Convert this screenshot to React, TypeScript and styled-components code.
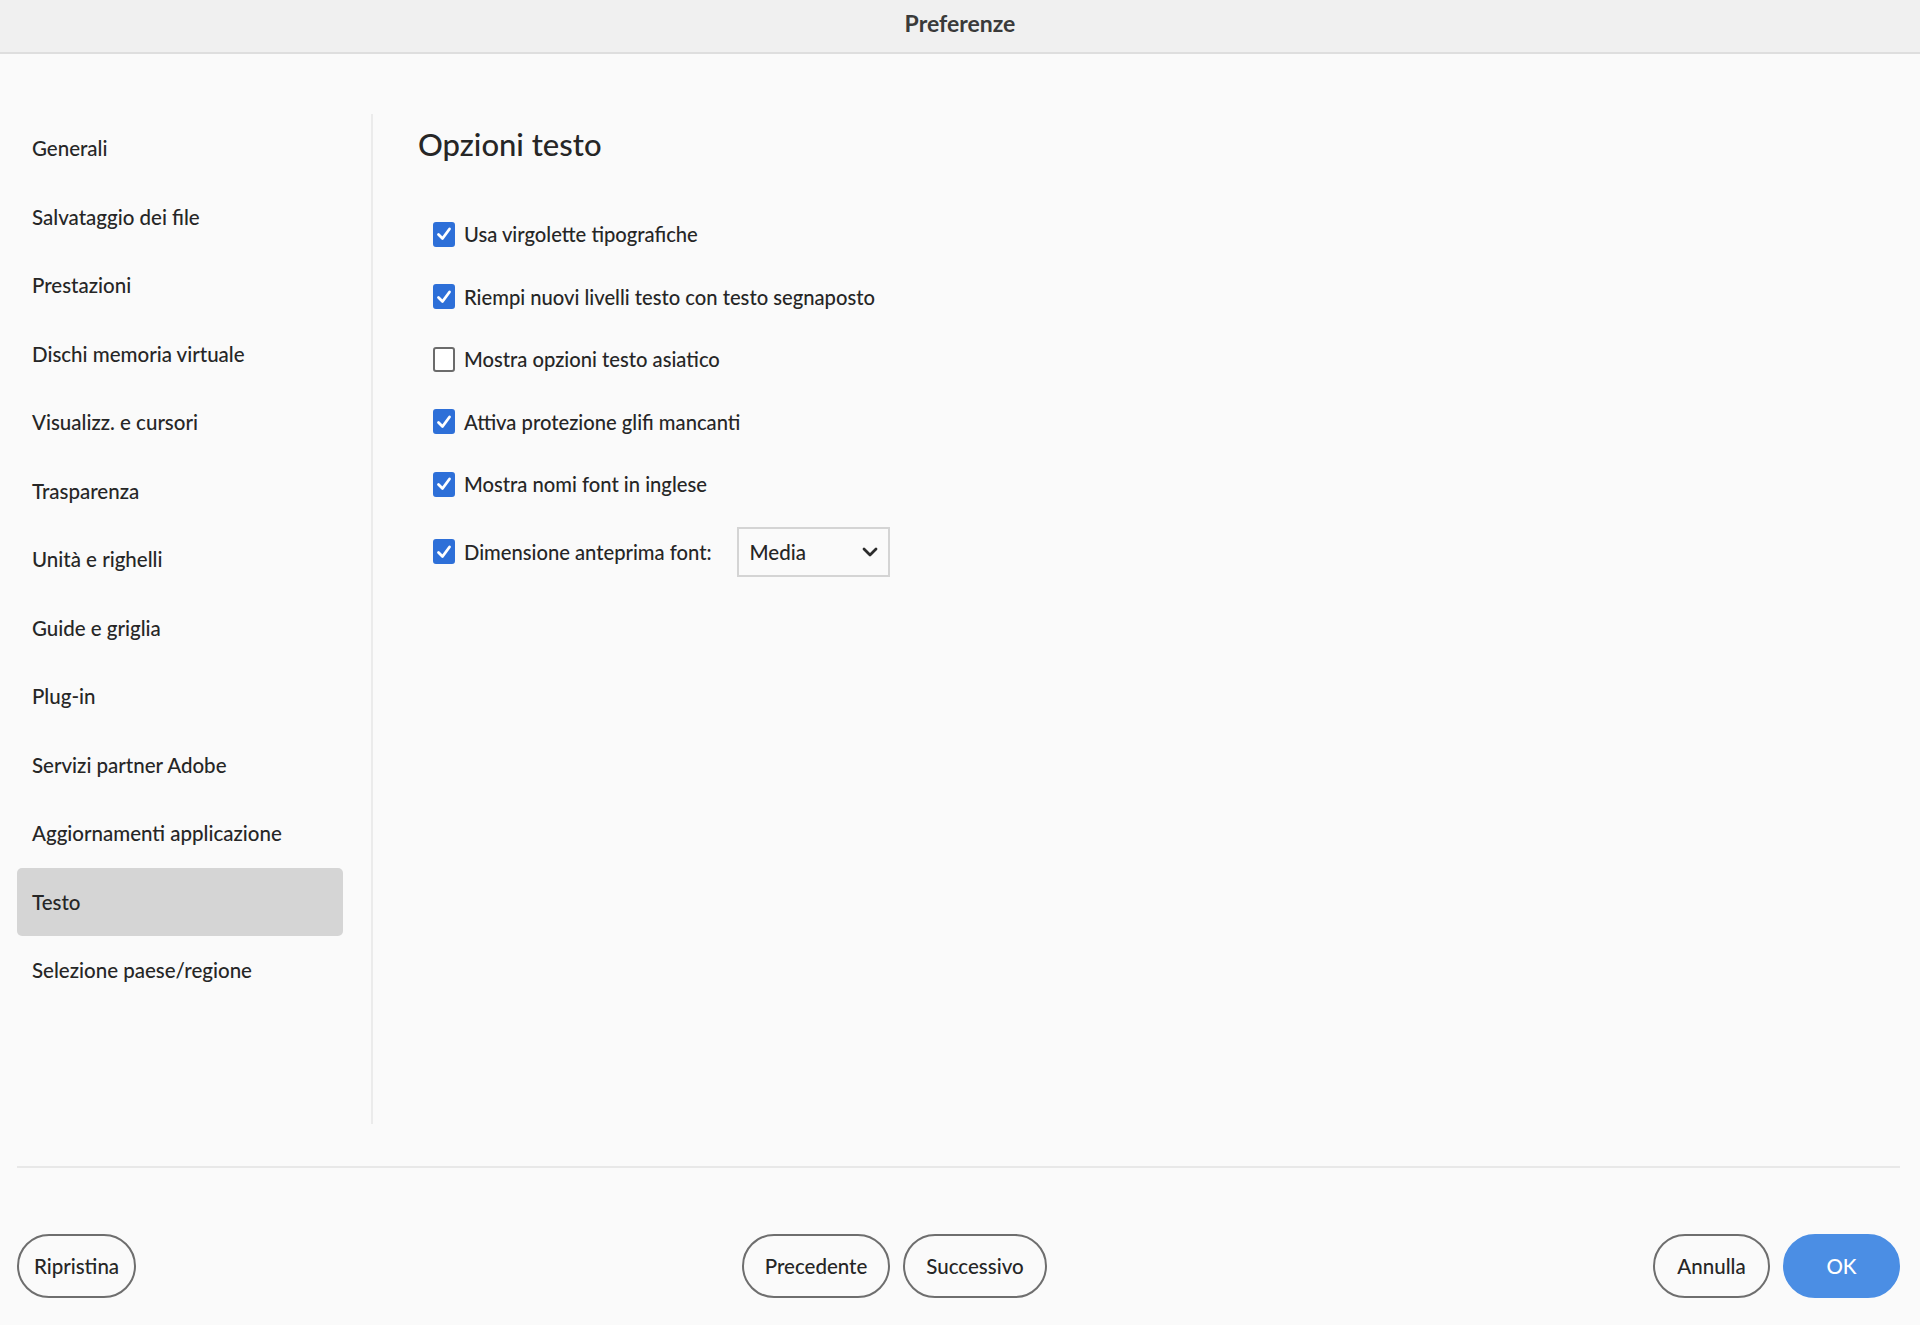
import React from "react";
import styled, { createGlobalStyle } from "styled-components";

const FONT = `Lato, "Liberation Sans", sans-serif`;

const Global = createGlobalStyle`
  html, body { margin: 0; padding: 0; background: #fafafa; }
  body { font-family: ${FONT}; color: #2c2c2c; }
  * { box-sizing: border-box; }
`;

const Page = styled.div`
  width: 1920px;
  height: 1325px;
  display: flex;
  flex-direction: column;
  background: #fafafa;
  overflow: hidden;
`;

const TitleBar = styled.header`
  height: 54px;
  flex: none;
  display: flex;
  align-items: center;
  justify-content: center;
  background: #f0f0f0;
  border-bottom: 2px solid #dedede;
  font-size: 23px;
  font-weight: 700;
  color: #3a3a3a;
  padding-bottom: 6px;
`;

const Main = styled.div`
  display: flex;
  padding: 60px 20px 0 17px;
  height: 1070px;
  flex: none;
`;

const Sidebar = styled.nav`
  width: 326px;
  flex: none;
  display: flex;
  flex-direction: column;
`;

const NavItem = styled.div<{ $active?: boolean }>`
  height: 68.5px;
  display: flex;
  align-items: center;
  padding-left: 15px;
  font-size: 20.5px;
  font-weight: 500;
  color: #262626;
  border-radius: 5px;
  background: ${(p) => (p.$active ? "#d5d5d5" : "transparent")};
`;

const VDivider = styled.div`
  width: 2px;
  height: 1010px;
  margin-left: 28px;
  background: #ebebeb;
  flex: none;
`;

const Content = styled.section`
  flex: 1;
  padding-left: 45px;
  display: flex;
  flex-direction: column;
`;

const Heading = styled.h1`
  margin: 0;
  font-size: 31px;
  line-height: 60px;
  font-weight: 500;
  color: #262626;
`;

const Options = styled.div`
  margin-top: 29px;
  display: flex;
  flex-direction: column;
  padding-left: 15px;
`;

const Row = styled.label<{ $tall?: boolean }>`
  height: ${(p) => (p.$tall ? "72px" : "62.5px")};
  display: flex;
  align-items: center;
  gap: 9px;
  font-size: 20.2px;
  font-weight: 500;
  color: #262626;
`;

const Box = styled.span<{ $checked: boolean }>`
  width: 22px;
  height: 25px;
  flex: none;
  border-radius: 3px;
  display: flex;
  align-items: center;
  justify-content: center;
  background: ${(p) => (p.$checked ? "#2d6fd8" : "#ffffff")};
  border: 2px solid ${(p) => (p.$checked ? "#2d6fd8" : "#6b6b6b")};
`;

const Select = styled.div`
  margin-left: 16px;
  width: 153px;
  height: 50px;
  border: 2px solid #d4d4d4;
  background: #fafafa;
  display: flex;
  align-items: center;
  justify-content: space-between;
  padding: 0 10px 0 11px;
  font-size: 20.5px;
  font-weight: 500;
  color: #262626;
`;

const FooterLine = styled.div`
  margin: 42px 20px 0 17px;
  height: 2px;
  background: #e8e8e8;
  flex: none;
`;

const Footer = styled.footer`
  display: flex;
  justify-content: space-between;
  align-items: center;
  padding: 66px 20px 0 17px;
`;

const Group = styled.div`
  display: flex;
  gap: 13px;
`;

const Button = styled.button<{ $w: number; $primary?: boolean }>`
  width: ${(p) => p.$w}px;
  height: 64px;
  border-radius: 32px;
  font-family: ${FONT};
  font-size: 20.5px;
  font-weight: 500;
  display: flex;
  align-items: center;
  justify-content: center;
  padding: 0;
  cursor: pointer;
  color: ${(p) => (p.$primary ? "#ffffff" : "#262626")};
  background: ${(p) => (p.$primary ? "#4b8ee4" : "transparent")};
  border: 2px solid ${(p) => (p.$primary ? "#4b8ee4" : "#6e6e6e")};
`;

const Check = () => (
  <svg width="16" height="16" viewBox="0 0 16 16" fill="none">
    <path d="M2.5 8.5 L6.5 12.5 L13.5 3" stroke="#fff" strokeWidth="2.8" strokeLinecap="round" strokeLinejoin="round" />
  </svg>
);

const Chevron = () => (
  <svg width="16" height="10" viewBox="0 0 16 10" fill="none">
    <path d="M2 2 L8 8 L14 2" stroke="#2c2c2c" strokeWidth="2.8" strokeLinecap="round" strokeLinejoin="round" />
  </svg>
);

const navItems = [
  "Generali",
  "Salvataggio dei file",
  "Prestazioni",
  "Dischi memoria virtuale",
  "Visualizz. e cursori",
  "Trasparenza",
  "Unità e righelli",
  "Guide e griglia",
  "Plug-in",
  "Servizi partner Adobe",
  "Aggiornamenti applicazione",
  "Testo",
  "Selezione paese/regione",
];

const options: { label: string; checked: boolean }[] = [
  { label: "Usa virgolette tipografiche", checked: true },
  { label: "Riempi nuovi livelli testo con testo segnaposto", checked: true },
  { label: "Mostra opzioni testo asiatico", checked: false },
  { label: "Attiva protezione glifi mancanti", checked: true },
  { label: "Mostra nomi font in inglese", checked: true },
];

export default function App() {
  return (
    <Page>
      <Global />
      <TitleBar>Preferenze</TitleBar>
      <Main>
        <Sidebar>
          {navItems.map((n) => (
            <NavItem key={n} $active={n === "Testo"}>
              {n}
            </NavItem>
          ))}
        </Sidebar>
        <VDivider />
        <Content>
          <Heading>Opzioni testo</Heading>
          <Options>
            {options.map((o) => (
              <Row key={o.label}>
                <Box $checked={o.checked}>{o.checked && <Check />}</Box>
                {o.label}
              </Row>
            ))}
            <Row $tall>
              <Box $checked>
                <Check />
              </Box>
              Dimensione anteprima font:
              <Select>
                <span>Media</span>
                <Chevron />
              </Select>
            </Row>
          </Options>
        </Content>
      </Main>
      <FooterLine />
      <Footer>
        <Button $w={119}>Ripristina</Button>
        <Group>
          <Button $w={148}>Precedente</Button>
          <Button $w={144}>Successivo</Button>
        </Group>
        <Group>
          <Button $w={117}>Annulla</Button>
          <Button $w={117} $primary>
            OK
          </Button>
        </Group>
      </Footer>
    </Page>
  );
}
